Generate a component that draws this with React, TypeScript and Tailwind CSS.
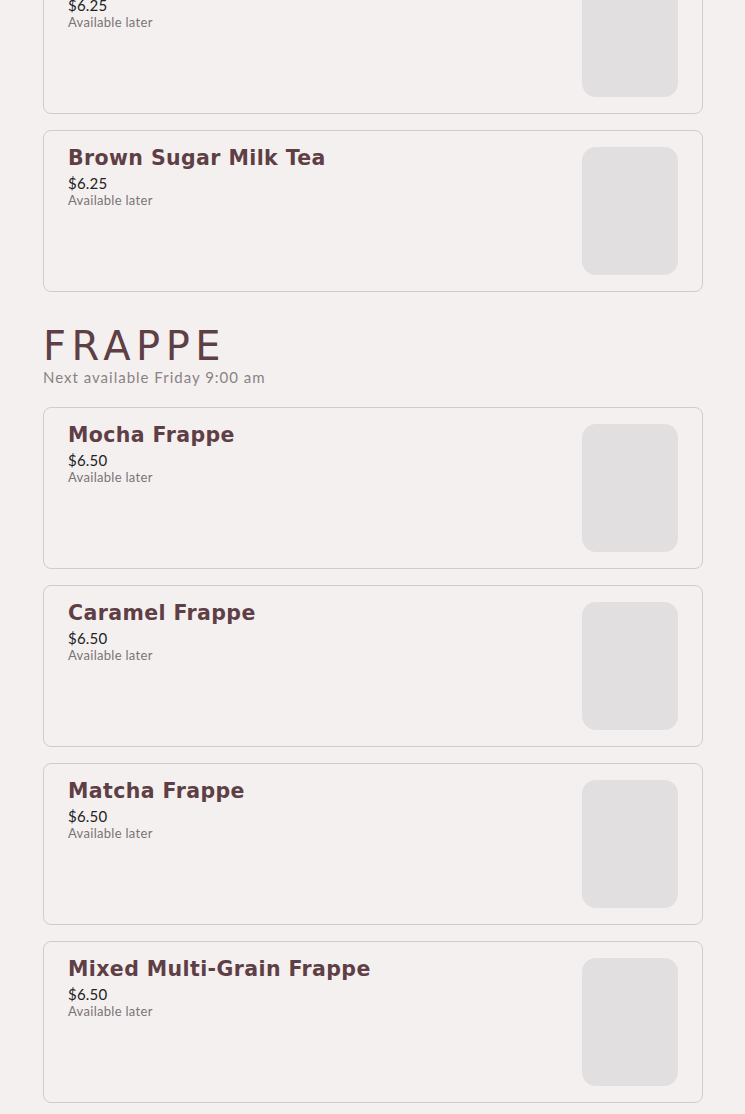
import React from "react";

type Item = { name: string; price: string };

function Card({ item }: { item: Item }) {
  return (
    <div className="flex justify-between rounded-lg border border-[#d2cacb] bg-[#f5f0f0] pl-6 pr-6 py-4 h-[162px]">
      <div className="flex flex-col">
        <div className="text-[20.5px] leading-[22px] font-bold tracking-[0.4px] text-[#5e3f45] [font-family:'DejaVu_Sans',sans-serif]">
          {item.name}
        </div>
        <div className="mt-[5px] text-[15px] leading-[18px] tracking-[0.2px] text-[#222] [font-family:Lato,sans-serif]">{item.price}</div>
        <div className="text-[13px] leading-[16px] tracking-[0.3px] text-[#7a7475] [font-family:Lato,sans-serif]">Available later</div>
      </div>
      <div className="w-[96px] h-[128px] rounded-[14px] bg-[#e2dfe0] shrink-0" />
    </div>
  );
}

export default function App() {
  const milk: Item[] = [
    { name: "Taro Milk Tea", price: "$6.25" },
    { name: "Brown Sugar Milk Tea", price: "$6.25" },
  ];
  const frappe: Item[] = [
    { name: "Mocha Frappe", price: "$6.50" },
    { name: "Caramel Frappe", price: "$6.50" },
    { name: "Matcha Frappe", price: "$6.50" },
    { name: "Mixed Multi-Grain Frappe", price: "$6.50" },
  ];
  return (
    <div className="min-h-[1114px] bg-[#f5f0f0] overflow-hidden">
      <div className="ml-[43px] w-[660px] -mt-[48px] pb-10">
        <div className="flex flex-col gap-4">
          {milk.map((m) => (
            <Card key={m.name} item={m} />
          ))}
        </div>
        <div className="mt-[31px] mb-[22px]">
          <h2 className="text-[40px] leading-[46px] tracking-[5.5px] text-[#5e3f45] [font-family:'DejaVu_Sans',sans-serif]">FRAPPE</h2>
          <div className="text-[15px] leading-[16px] tracking-[1px] text-[#8a8384] [font-family:Lato,sans-serif]">
            Next available Friday 9:00 am
          </div>
        </div>
        <div className="flex flex-col gap-4">
          {frappe.map((m) => (
            <Card key={m.name} item={m} />
          ))}
        </div>
      </div>
    </div>
  );
}
